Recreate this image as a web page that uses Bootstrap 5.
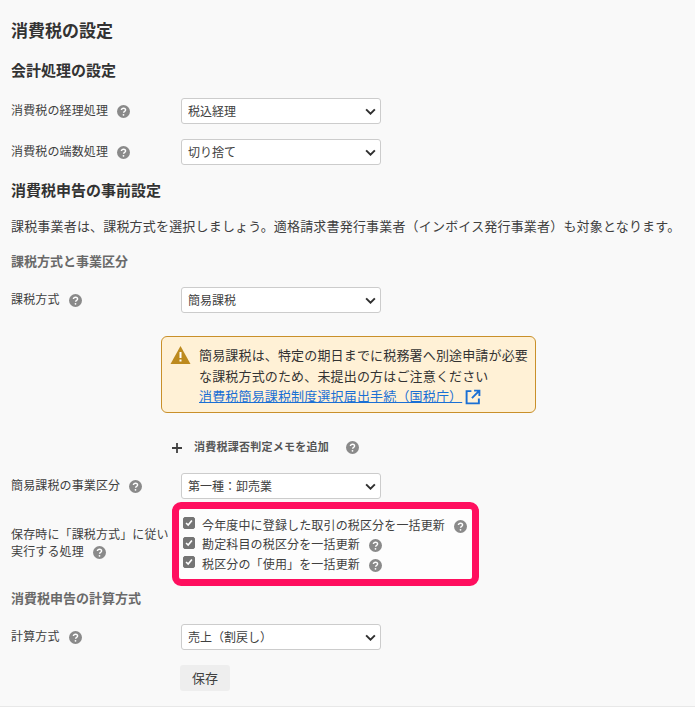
<!DOCTYPE html>
<html lang="ja">
<head>
<meta charset="utf-8">
<title>消費税の設定</title>
<link href="https://cdn.jsdelivr.net/npm/bootstrap@5.3.0/dist/css/bootstrap.min.css" rel="stylesheet">
<style>
html,body{height:100%}
body{background:#fff;font-family:"Noto Sans CJK JP",sans-serif;color:#404040;font-size:12px}
.pane{background:#f9f9f9;height:707px;border-bottom:1px solid #e8e8e8;padding:18px 11px 0;overflow:hidden}
.ttl{font-size:17px;font-weight:700;line-height:24px;margin:0 0 17px;color:#333}
.sec{font-size:15px;font-weight:700;line-height:22px;margin:0;color:#333}
.sub{font-size:13px;font-weight:700;line-height:20px;margin:0;color:#6a6a6a}
.para{font-size:13px;line-height:20px;margin:0;color:#404040;letter-spacing:.18px;white-space:nowrap}
.frow{display:flex;align-items:center}
.lbl{width:170px;flex:none;font-size:12px;line-height:17px;color:#404040;letter-spacing:.13px;white-space:nowrap;padding-bottom:4px}
.sel{width:200px;height:26px;min-height:26px;font-size:12px;line-height:17px;padding:0 24px 2px 6px;border:1px solid #ccc;border-radius:3px;color:#404040;background-color:#fff;background-image:url("data:image/svg+xml,%3csvg xmlns='http://www.w3.org/2000/svg' viewBox='0 0 12 8'%3e%3cpath fill='none' stroke='%23303030' stroke-width='2.200' d='M1 1.500l5 5 5-5'/%3e%3c/svg%3e");background-size:11px 7px;background-position:right 4px center;font-family:inherit}
.hlp{display:inline-block;width:13px;height:13px;vertical-align:-3px;margin-left:9px}
.alertbox{width:375px;height:77px;margin:0 0 0 150px;padding:8px 8px 0 8px;background:#fff1d6;border:1px solid #c9902a;border-radius:6px;font-size:13px;line-height:20.500px;color:#333;white-space:nowrap;letter-spacing:.16px}
.alertbox a{color:#1a6fd4}
.warnico{width:21px;height:18px;flex:none;margin-top:1px}
.extico{width:16px;height:16px;vertical-align:-4px;margin-left:3px}
.addline{margin-left:161px;height:16px;font-size:11px;font-weight:700;line-height:16px;color:#555;letter-spacing:.25px;white-space:nowrap}
.plus{width:10px;height:10px;margin-right:12px}
.redbox{width:307px;height:84px;margin-left:-9px;border:7px solid #ff0f5f;border-radius:9px;background:#fdfdfd;padding:6px 0 0 4px;flex:none}
.chk{display:flex;align-items:center;height:19.500px;font-size:12px;letter-spacing:.15px;color:#404040;white-space:nowrap}
.chk .form-check-input{width:12px;height:12px;margin:0 7px 3px 0;border-radius:2px;flex:none}
.chk .form-check-input:checked{background-color:#757575;border-color:#757575;background-image:url("data:image/svg+xml,%3csvg xmlns='http://www.w3.org/2000/svg' viewBox='0 0 12 12'%3e%3cpath fill='none' stroke='%23fff' stroke-width='2' d='M2.500 6l2.500 2.500 4.500-5.500'/%3e%3c/svg%3e")}
.chk .hlp{margin-top:3px}
.savebtn{display:block;width:50px;height:26px;padding:0;font-size:13px;background:#eee;border:0;border-radius:3px;color:#404040;margin-left:169px}
</style>
</head>
<body>
<svg width="0" height="0" class="d-block" aria-hidden="true"><defs>
<symbol id="q" viewBox="0 0 13 13"><circle cx="6.500" cy="6.500" r="6.500" fill="#8a8a8a"/><path d="M4.400 5.100c0-1.200 1-1.900 2.100-1.900s2.100.7 2.100 1.800c0 1.500-2 1.400-2 2.800" fill="none" stroke="#fff" stroke-width="1.400"/><circle cx="6.500" cy="9.800" r=".9" fill="#fff"/></symbol>
</defs></svg>
<div class="pane">
  <h1 class="ttl">消費税の設定</h1>
  <h2 class="sec">会計処理の設定</h2>
  <div class="frow" style="margin-top:17px"><div class="lbl">消費税の経理処理<svg class="hlp"><use href="#q"/></svg></div>
    <select class="form-select sel"><option>税込経理</option></select></div>
  <div class="frow" style="margin-top:15px"><div class="lbl">消費税の端数処理<svg class="hlp"><use href="#q"/></svg></div>
    <select class="form-select sel"><option>切り捨て</option></select></div>
  <h2 class="sec" style="margin-top:14px">消費税申告の事前設定</h2>
  <p class="para" style="margin-top:15px">課税事業者は、課税方式を選択しましょう。適格請求書発行事業者（インボイス発行事業者）も対象となります。</p>
  <h3 class="sub" style="margin-top:15px">課税方式と事業区分</h3>
  <div class="frow" style="margin-top:16px"><div class="lbl">課税方式<svg class="hlp"><use href="#q"/></svg></div>
    <select class="form-select sel"><option>簡易課税</option></select></div>
  <div class="alertbox d-flex gap-2" style="margin-top:23px">
    <svg class="warnico" viewBox="0 0 20 18"><path d="M10 0 20 18H0Z" fill="#bd8a1e"/><path d="M9 6h2v6H9zM9 13.500h2v2H9z" fill="#fff"/></svg>
    <div>簡易課税は、特定の期日までに税務署へ別途申請が必要<br>な課税方式のため、未提出の方はご注意ください<br><a href="#">消費税簡易課税制度選択届出手続（国税庁）</a><svg class="extico" viewBox="0 0 15 15"><path d="M6 2H1.500v11.500H13V9M8.500 1.500H13.500V6.500M13 2 6.500 8.500" fill="none" stroke="#1a6fd4" stroke-width="1.800"/></svg></div>
  </div>
  <div class="addline" style="margin-top:25px"><svg class="plus" viewBox="0 0 10 10"><path d="M5 0v10M0 5h10" stroke="#404040" stroke-width="1.800"/></svg>消費税課否判定メモを追加<svg class="hlp" style="margin-left:17px"><use href="#q"/></svg></div>
  <div class="frow" style="margin-top:19px"><div class="lbl">簡易課税の事業区分<svg class="hlp"><use href="#q"/></svg></div>
    <select class="form-select sel"><option>第一種：卸売業</option></select></div>
  <div class="frow" style="margin-top:3px"><div class="lbl">保存時に「課税方式」に従い<br>実行する処理<svg class="hlp"><use href="#q"/></svg></div>
    <div class="redbox">
      <label class="chk"><input class="form-check-input" type="checkbox" checked>今年度中に登録した取引の税区分を一括更新<svg class="hlp"><use href="#q"/></svg></label>
      <label class="chk"><input class="form-check-input" type="checkbox" checked>勘定科目の税区分を一括更新<svg class="hlp"><use href="#q"/></svg></label>
      <label class="chk"><input class="form-check-input" type="checkbox" checked>税区分の「使用」を一括更新<svg class="hlp"><use href="#q"/></svg></label>
    </div></div>
  <h3 class="sub" style="margin-top:2px">消費税申告の計算方式</h3>
  <div class="frow" style="margin-top:16px"><div class="lbl">計算方式<svg class="hlp"><use href="#q"/></svg></div>
    <select class="form-select sel"><option>売上（割戻し）</option></select></div>
  <button type="button" class="btn savebtn" style="margin-top:15px">保存</button>
</div>
<script src="https://cdn.jsdelivr.net/npm/bootstrap@5.3.0/dist/js/bootstrap.bundle.min.js"></script>
</body>
</html>
